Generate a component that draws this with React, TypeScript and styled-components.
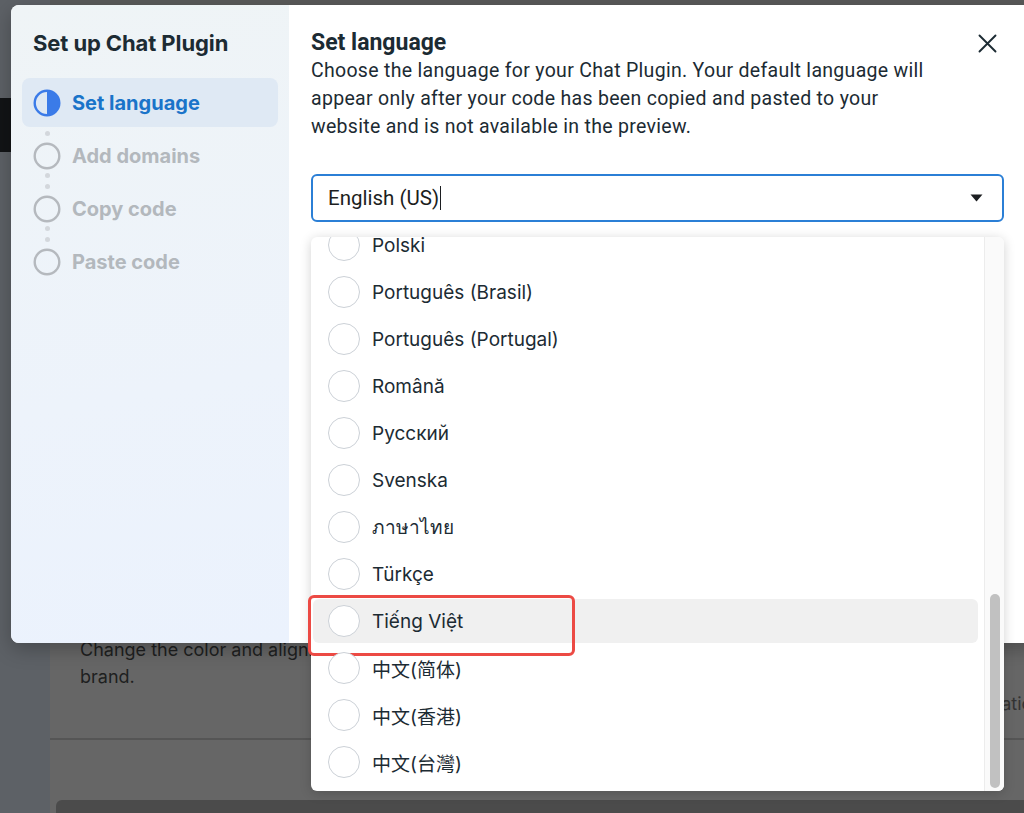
import styled, { createGlobalStyle } from 'styled-components';

const GlobalStyle = createGlobalStyle`
  html, body {
    margin: 0;
    padding: 0;
    background: #666666;
  }
  * {
    box-sizing: border-box;
  }
`;

const Page = styled.div`
  position: relative;
  display: flex;
  width: 100%;
  height: 813px;
  overflow: hidden;
  background: #666666;
  font-family: Inter, "Noto Sans", sans-serif;
`;

const Rail = styled.div`
  width: 50px;
  flex-shrink: 0;
  background: #5d6166;
  padding-top: 98px;
`;

const RailTab = styled.div`
  width: 11px;
  height: 54px;
  background: #121416;
`;

const Main = styled.div`
  flex: 1;
  display: flex;
  flex-direction: column;
  border-top: 5px solid #5a5a5a;
`;

const BgCard = styled.div`
  flex-shrink: 0;
  display: flex;
  justify-content: space-between;
  align-items: flex-start;
  padding: 631px 0 0 30px;
  height: 735px;
  border-bottom: 2px solid #555555;
`;

const BgText = styled.p`
  margin: 0;
  width: 620px;
  font-size: 18px;
  line-height: 27px;
  color: #1e1f20;
`;

const BgAction = styled.span`
  margin: 57px -19px 0 0;
  font-size: 18px;
  color: #333333;
`;

const BgFooter = styled.div`
  flex-shrink: 0;
  margin: 60px 0 0 6px;
  height: 20px;
  border-radius: 6px 0 0 0;
  background: #4b4b4b;
`;

const Modal = styled.div`
  position: absolute;
  left: 11px;
  top: 5px;
  width: 1030px;
  height: 638px;
  display: flex;
  border-radius: 8px;
  background: #ffffff;
  box-shadow: 0 6px 20px rgba(0, 0, 0, 0.25);
`;

const Sidebar = styled.aside`
  width: 278px;
  flex-shrink: 0;
  padding: 24px 11px;
  border-radius: 8px 0 0 8px;
  background: linear-gradient(170deg, #eff4f6 0%, #edf3fb 60%, #ebf2fd 100%);
`;

const SideTitle = styled.h2`
  margin: 0 0 0 11px;
  font-size: 22px;
  line-height: 28px;
  font-weight: 700;
  letter-spacing: -0.1px;
  color: #1c2b33;
`;

const Steps = styled.ol`
  list-style: none;
  margin: 21px 0 0;
  padding: 0;
  display: flex;
  flex-direction: column;
  gap: 4px;
`;

const Step = styled.li<{ $active?: boolean }>`
  position: relative;
  display: flex;
  align-items: center;
  gap: 11px;
  height: 49px;
  padding-left: 11px;
  border-radius: 8px;
  background: ${p => (p.$active ? '#dfe9f4' : 'transparent')};
  font-size: 20px;
  font-weight: 700;
  color: ${p => (p.$active ? '#1a74c9' : '#b3b8bd')};

  &:not(:first-child)::before,
  &:not(:last-child):not(:first-child)::after {
    content: '';
    position: absolute;
    left: 23px;
    width: 5px;
    height: 5px;
    border-radius: 50%;
    background: #d3d7dc;
  }
  &::before {
    top: 0px;
  }
  &::after {
    bottom: 2px;
  }
`;

const StepIcon = ({ active }: { active?: boolean }) => (
  <svg width="28" height="28" viewBox="0 0 28 28">
    <circle cx="14" cy="14" r="12.3" fill="none" stroke={active ? '#3b7be8' : '#b5b9be'} strokeWidth="2.4" />
    {active && <path d="M14 1.7 A12.3 12.3 0 0 1 14 26.3 Z" fill="#3b7be8" />}
  </svg>
);

const Content = styled.section`
  flex: 1;
  padding: 24px 0 0 22px;
  font-family: Roboto, "Liberation Sans", sans-serif;
  color: #1c2b33;
`;

const Column = styled.div`
  width: 693px;
`;

const Header = styled.div`
  display: flex;
  justify-content: space-between;
  align-items: center;
`;

const Title = styled.h1`
  margin: 0;
  font-size: 23px;
  line-height: 28px;
  font-weight: 700;
  color: #1c2b33;
`;

const CloseButton = styled.button`
  display: flex;
  border: none;
  background: none;
  padding: 0;
  margin-right: 7px;
  cursor: pointer;
`;

const Description = styled.p`
  margin: 0;
  width: 632px;
  font-size: 19.5px;
  line-height: 28px;
  letter-spacing: 0.3px;
  color: #1c2b33;
`;

const SelectWrap = styled.div`
  position: relative;
  margin-top: 33px;
`;

const SelectBox = styled.div`
  display: flex;
  align-items: center;
  justify-content: space-between;
  height: 48px;
  padding: 0 19px 0 15px;
  border: 2px solid #2b7fd6;
  border-radius: 6px;
  font-size: 20.5px;
  color: #1c1e21;
`;

const Value = styled.span`
  display: flex;
  align-items: center;
`;

const Cursor = styled.span`
  display: inline-block;
  width: 1px;
  height: 24px;
  margin-left: 1px;
  background: #1c1e21;
`;

const Dropdown = styled.div`
  position: absolute;
  top: calc(100% + 15px);
  left: 0;
  width: 693px;
  height: 554px;
  display: flex;
  border-radius: 6px;
  background: #ffffff;
  box-shadow: 0 2px 12px rgba(0, 0, 0, 0.18);
`;

const List = styled.div`
  flex: 1;
  clip-path: inset(0 -12px 0 -12px);
`;

const Options = styled.ul`
  list-style: none;
  margin: -14px 0 0;
  padding: 0;
  display: flex;
  flex-direction: column;
  gap: 3px;
`;

const Option = styled.li<{ $highlight?: boolean }>`
  position: relative;
  display: flex;
  align-items: center;
  gap: 12px;
  height: 44px;
  margin: 0 6px 0 2px;
  padding-left: 15px;
  border-radius: 6px;
  background: ${p => (p.$highlight ? '#f0f0f0' : 'transparent')};
  font-family: Inter, "Noto Sans", "Noto Sans CJK SC", sans-serif;
  font-size: 19px;
  color: #1c2b33;

  ${p =>
    p.$highlight &&
    `
    &::after {
      content: '';
      position: absolute;
      left: -5px;
      top: -4px;
      width: 261px;
      height: 55px;
      border: 3px solid #ec4a44;
      border-radius: 6px;
    }
  `}
`;

const Radio = styled.span`
  width: 32px;
  height: 32px;
  flex-shrink: 0;
  border-radius: 50%;
  border: 1.5px solid #ccd1d7;
  background: #ffffff;
`;

const Track = styled.div`
  width: 20px;
  flex-shrink: 0;
  display: flex;
  flex-direction: column;
  justify-content: flex-end;
  padding: 0 4px 3px 5px;
  border-left: 1px solid #ececec;
  border-radius: 0 6px 6px 0;
  background: #fafafa;
`;

const Thumb = styled.div`
  height: 194px;
  border-radius: 5px;
  background: #c1c1c1;
`;

const steps = ['Set language', 'Add domains', 'Copy code', 'Paste code'];

const languages = [
  'Polski',
  'Português (Brasil)',
  'Português (Portugal)',
  'Română',
  'Русский',
  'Svenska',
  'ภาษาไทย',
  'Türkçe',
  'Tiếng Việt',
  '中文(简体)',
  '中文(香港)',
  '中文(台灣)',
];

export default function App() {
  return (
    <>
      <GlobalStyle />
      <Page>
        <Rail>
          <RailTab />
        </Rail>
        <Main>
          <BgCard>
            <BgText>
              Change the color and alignment of your Chat Plugin to match your brand.
            </BgText>
            <BgAction>Customization</BgAction>
          </BgCard>
          <BgFooter />
        </Main>

        <Modal>
          <Sidebar>
            <SideTitle>Set up Chat Plugin</SideTitle>
            <Steps>
              {steps.map((s, i) => (
                <Step key={s} $active={i === 0}>
                  <StepIcon active={i === 0} />
                  {s}
                </Step>
              ))}
            </Steps>
          </Sidebar>

          <Content>
            <Column>
              <Header>
                <Title>Set language</Title>
                <CloseButton aria-label="Close">
                  <svg width="19" height="19" viewBox="0 0 19 19">
                    <path d="M1.5 1.5 L17.5 17.5 M17.5 1.5 L1.5 17.5" stroke="#1c2b33" strokeWidth="1.9" strokeLinecap="round" />
                  </svg>
                </CloseButton>
              </Header>
              <Description>
                Choose the language for your Chat Plugin. Your default language will appear only after
                your code has been copied and pasted to your website and is not available in the preview.
              </Description>

              <SelectWrap>
                <SelectBox>
                  <Value>
                    English (US)
                    <Cursor />
                  </Value>
                  <svg width="13" height="8" viewBox="0 0 13 8">
                    <path d="M0.5 0.5 H12.5 L6.5 7.5 Z" fill="#1c1e21" />
                  </svg>
                </SelectBox>
                <Dropdown>
                  <List>
                    <Options>
                      {languages.map(l => (
                        <Option key={l} $highlight={l === 'Tiếng Việt'}>
                          <Radio />
                          {l}
                        </Option>
                      ))}
                    </Options>
                  </List>
                  <Track>
                    <Thumb />
                  </Track>
                </Dropdown>
              </SelectWrap>
            </Column>
          </Content>
        </Modal>
      </Page>
    </>
  );
}
